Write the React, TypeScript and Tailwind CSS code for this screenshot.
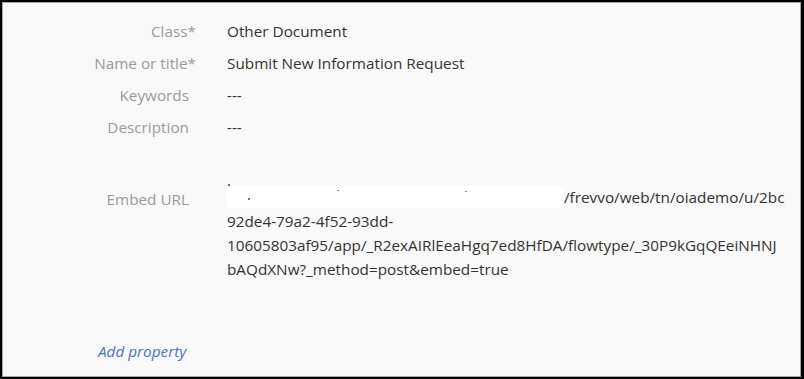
import React from 'react';

const font = { fontFamily: '"Open Sans", "Noto Sans", sans-serif' };

function Row({ label, required, children }: { label: string; required?: boolean; children: React.ReactNode }) {
  return (
    <div className="flex h-8 items-center">
      <div className="w-[186px] shrink-0 text-right text-[#9b9b9b]">
        {label}
        {required && <span className="mr-[-7px]">*</span>}
      </div>
      <div className="ml-[38px] text-[#333]">{children}</div>
    </div>
  );
}

export default function App() {
  return (
    <div className="w-[804px] h-[379px] border-t-2 border-l-2 border-r-[3px] border-b-2 border-black bg-white" style={font}>
      <div className="h-full border border-[#a8a8a8] bg-[#f9f9f9] text-[15.3px] flex flex-col pt-[12px]">
        <Row label="Class" required>Other Document</Row>
        <Row label="Name or title" required>Submit New Information Request</Row>
        <Row label="Keywords">---</Row>
        <Row label="Description">---</Row>

        <div className="flex mt-[42px] leading-6">
          <div className="w-[186px] shrink-0 text-right text-[#9b9b9b] pt-[2px]">Embed URL</div>
          <div className="ml-[38px] text-[#333] whitespace-nowrap">
            <div className="flex items-center">
              <span className="relative inline-block w-[337px] h-[22px] bg-white rounded-sm">
                <span className="absolute left-[1px] top-[-2px] w-[2px] h-[2px] bg-[#666]" />
                <span className="absolute left-[21px] top-[12px] w-[2px] h-[2px] bg-[#777]" />
                <span className="absolute left-[110px] top-[4px] w-[2px] h-[1px] bg-[#888]" />
                <span className="absolute left-[238px] top-[5px] w-[2px] h-[1px] bg-[#888]" />
              </span>
              <span>/frevvo/web/tn/oiademo/u/2bc</span>
            </div>
            <div>92de4-79a2-4f52-93dd-</div>
            <div>10605803af95/app/_R2exAIRlEeaHgq7ed8HfDA/flowtype/_30P9kGqQEeiNHNJ</div>
            <div>bAQdXNw?_method=post&amp;embed=true</div>
          </div>
        </div>

        <div className="mt-auto mb-[13px] ml-[95px] italic text-[#4a73c6]">Add property</div>
      </div>
    </div>
  );
}
